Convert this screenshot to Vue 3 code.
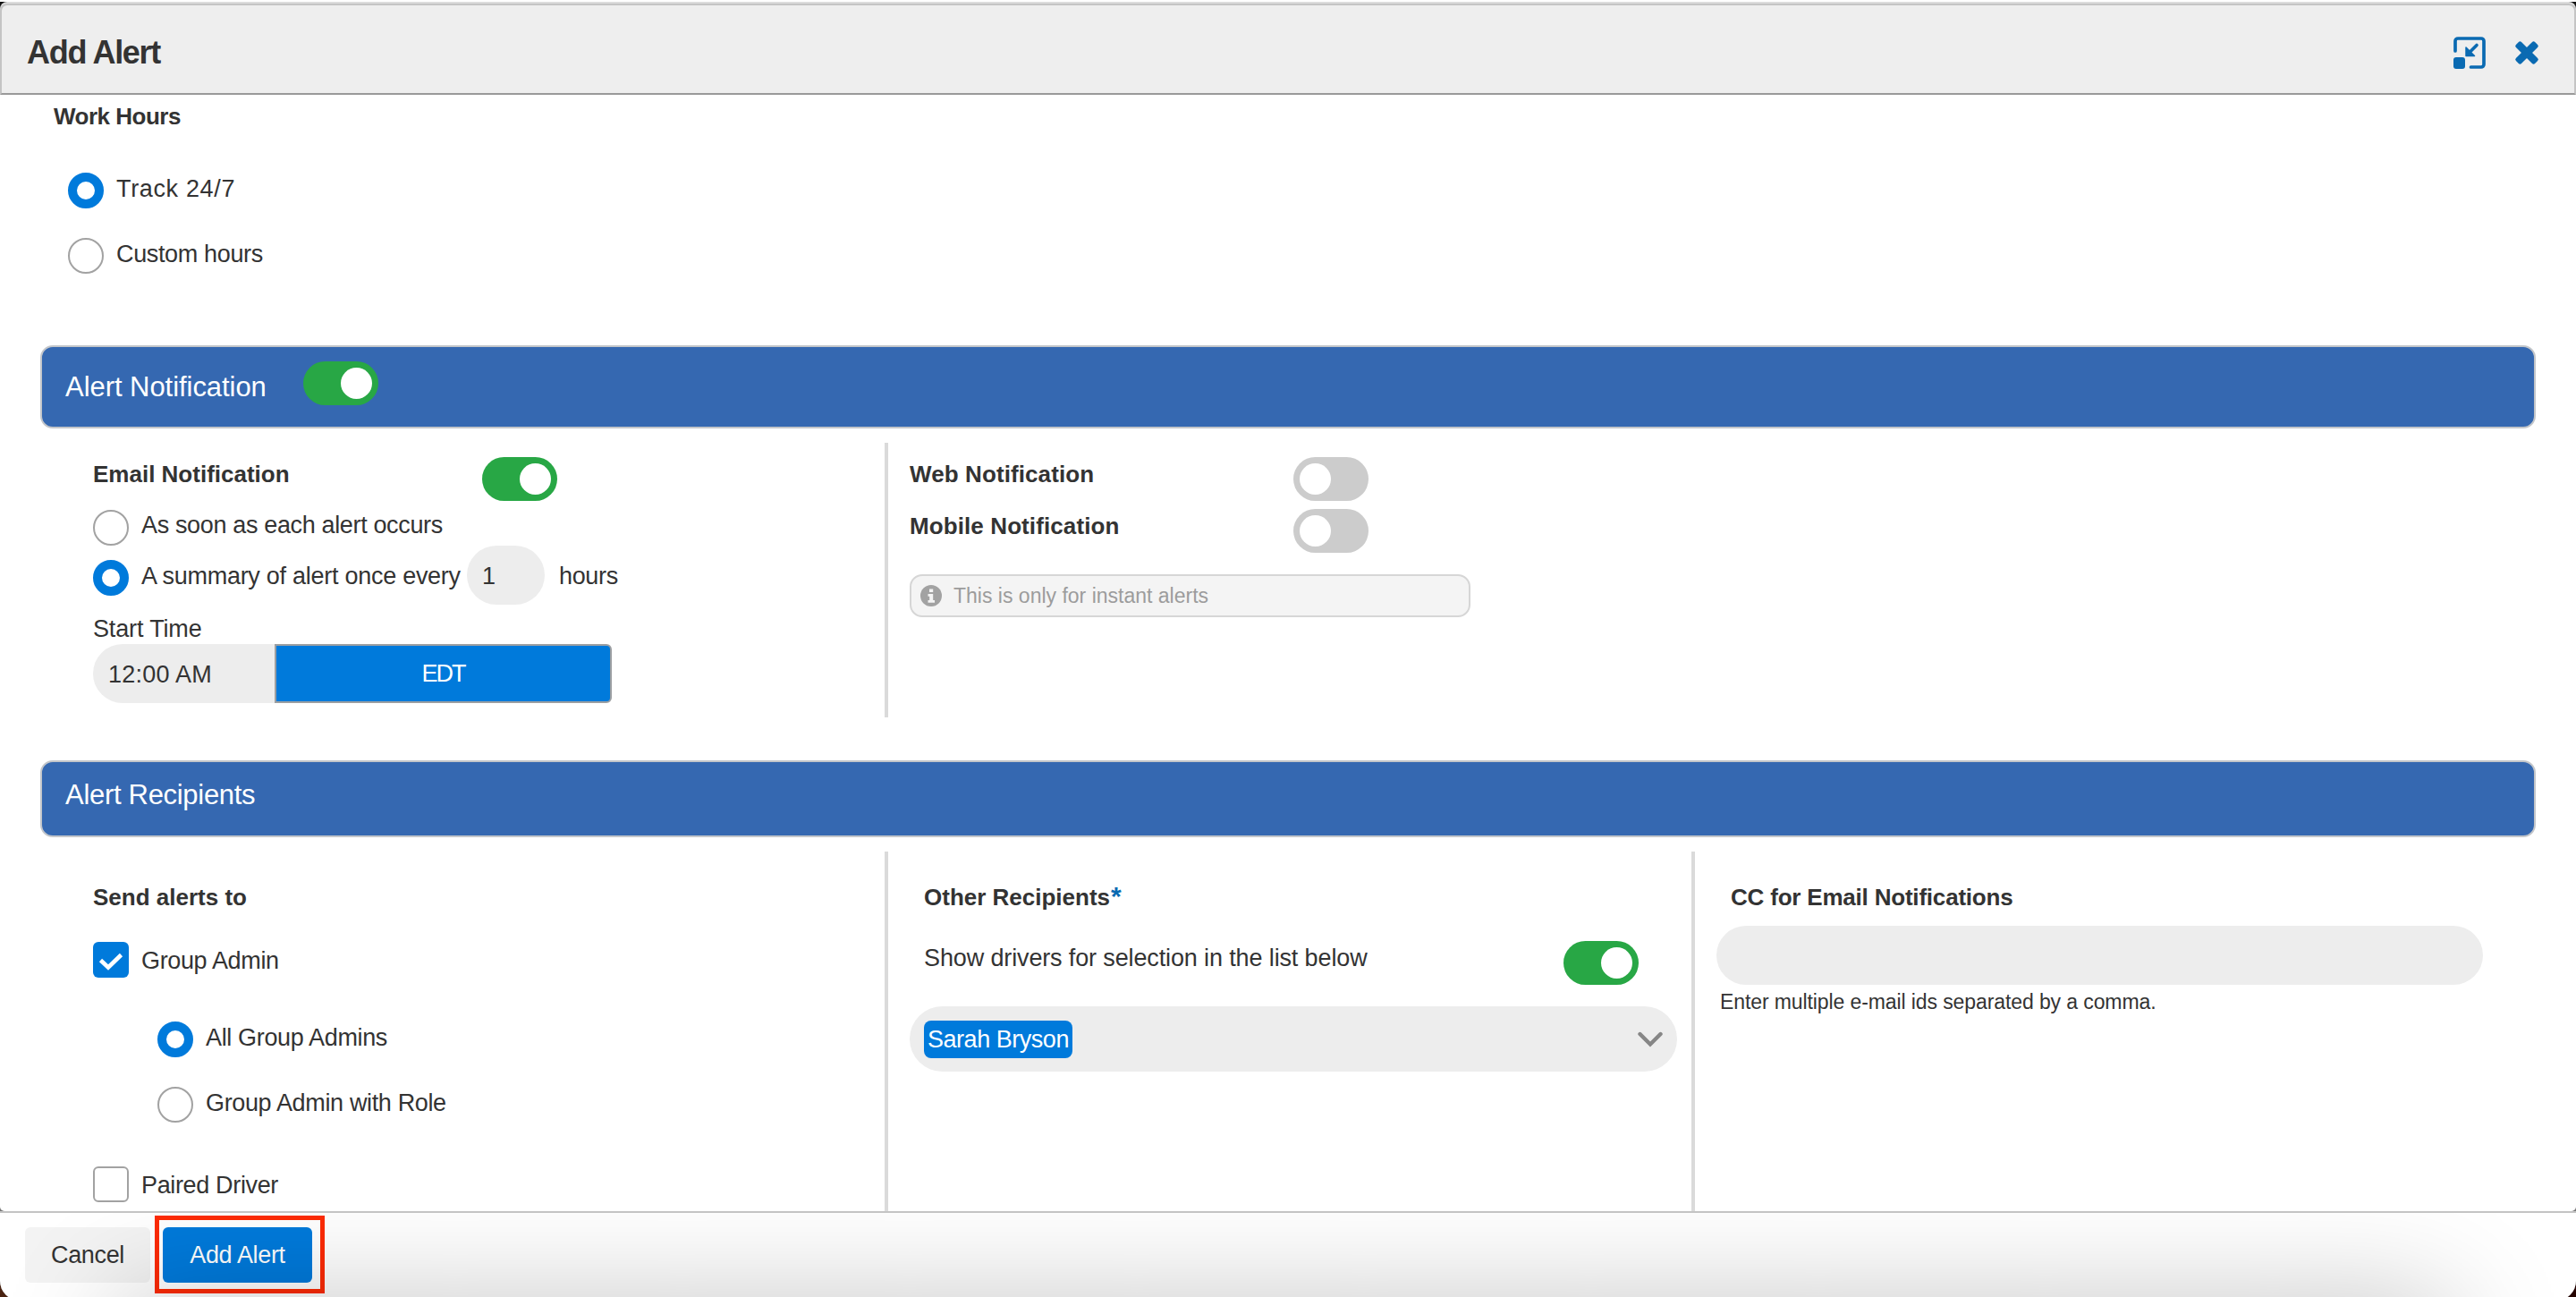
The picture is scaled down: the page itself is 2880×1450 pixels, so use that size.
<script setup>
import { ref } from 'vue';

const workHours = ref('all');
const alertEnabled = ref(true);
const emailEnabled = ref(true);
const webEnabled = ref(false);
const mobileEnabled = ref(false);
const frequency = ref('summary');
const groupAdmin = ref(true);
const adminScope = ref('all');
const pairedDriver = ref(false);
const showDrivers = ref(true);
const recipients = ref(['Sarah Bryson']);
</script>

<template>
  <div class="window">
    <div class="modal">
      <header class="modal-header">
        <h1>Add Alert</h1>
        <div class="header-actions">
          <svg class="resize-icon" viewBox="0 0 36 36">
            <path d="M2 16V5a3 3 0 0 1 3-3h26a3 3 0 0 1 3 3v26a3 3 0 0 1-3 3H19.5" fill="none" stroke="#0a6ab2" stroke-width="3.700" stroke-linecap="round" />
            <rect x="0" y="23" width="13" height="13" rx="3" fill="#0a6ab2" />
            <path d="M26 9.500L17 18.500" stroke="#0a6ab2" stroke-width="3.600" stroke-linecap="round" />
            <path d="M14 12v9.500h9.500z" fill="#0a6ab2" stroke="#0a6ab2" stroke-width="1.500" stroke-linejoin="round" />
          </svg>
          <svg class="close-icon" viewBox="0 0 28 28" fill="#0a6ab2">
            <rect x="-1" y="9.700" width="30" height="8.600" rx="2.200" transform="rotate(45 14 14)" />
            <rect x="-1" y="9.700" width="30" height="8.600" rx="2.200" transform="rotate(-45 14 14)" />
          </svg>
        </div>
      </header>

      <main class="modal-body">
        <section class="work-hours">
          <h2>Work Hours</h2>
          <div class="option" @click="workHours = 'all'">
            <span class="radio" :class="{ checked: workHours === 'all' }"></span>
            <span class="label track-label">Track 24/7</span>
          </div>
          <div class="option" @click="workHours = 'custom'">
            <span class="radio" :class="{ checked: workHours === 'custom' }"></span>
            <span class="label">Custom hours</span>
          </div>
        </section>

        <div class="banner banner-notification">
          <span>Alert Notification</span>
          <span class="toggle" :class="{ on: alertEnabled }" @click="alertEnabled = !alertEnabled"></span>
        </div>

        <section class="notification">
          <div class="email-col">
            <div class="email-head">
              <h2>Email Notification</h2>
              <span class="toggle" :class="{ on: emailEnabled }" @click="emailEnabled = !emailEnabled"></span>
            </div>
            <div class="option instant" @click="frequency = 'instant'">
              <span class="radio" :class="{ checked: frequency === 'instant' }"></span>
              <span class="label">As soon as each alert occurs</span>
            </div>
            <div class="summary" @click="frequency = 'summary'">
              <span class="radio" :class="{ checked: frequency === 'summary' }"></span>
              <span class="label">A summary of alert once every</span>
              <span class="hours-input">1</span>
              <span class="hours-label">hours</span>
            </div>
            <div class="start-label">Start Time</div>
            <div class="start-time">
              <span class="time-input">12:00 AM</span>
              <button class="zone">EDT</button>
            </div>
          </div>
          <div class="push-col">
            <div class="push-row">
              <h2>Web Notification</h2>
              <span class="toggle" :class="{ on: webEnabled }" @click="webEnabled = !webEnabled"></span>
            </div>
            <div class="push-row">
              <h2>Mobile Notification</h2>
              <span class="toggle" :class="{ on: mobileEnabled }" @click="mobileEnabled = !mobileEnabled"></span>
            </div>
            <div class="info">
              <svg viewBox="0 0 24 24">
                <circle cx="12" cy="12" r="12" fill="#a2a2a2" />
                <path d="M10 4.500h4.200v3.600H10zM8.500 10h5.700v7H16v2.700H8.500V17h1.700v-4.300H8.500z" fill="#f4f4f4" />
              </svg>
              <span>This is only for instant alerts</span>
            </div>
          </div>
        </section>

        <div class="banner banner-recipients">
          <span>Alert Recipients</span>
        </div>

        <section class="recipients">
          <div class="send-col">
            <h2>Send alerts to</h2>
            <div class="option group-admin" @click="groupAdmin = !groupAdmin">
              <span class="checkbox" :class="{ checked: groupAdmin }">
                <svg v-if="groupAdmin" viewBox="0 0 40 40">
                  <path d="M8.500 20.500l8.500 8L31.500 14.500" fill="none" stroke="#fff" stroke-width="4.600" />
                </svg>
              </span>
              <span class="label">Group Admin</span>
            </div>
            <div class="option nested" @click="adminScope = 'all'">
              <span class="radio" :class="{ checked: adminScope === 'all' }"></span>
              <span class="label">All Group Admins</span>
            </div>
            <div class="option nested" @click="adminScope = 'role'">
              <span class="radio" :class="{ checked: adminScope === 'role' }"></span>
              <span class="label">Group Admin with Role</span>
            </div>
            <div class="option paired" @click="pairedDriver = !pairedDriver">
              <span class="checkbox" :class="{ checked: pairedDriver }"></span>
              <span class="label">Paired Driver</span>
            </div>
          </div>

          <div class="other-col">
            <h2>Other Recipients<span class="required">*</span></h2>
            <div class="drivers-row">
              <span>Show drivers for selection in the list below</span>
              <span class="toggle" :class="{ on: showDrivers }" @click="showDrivers = !showDrivers"></span>
            </div>
            <div class="select">
              <span v-for="name in recipients" :key="name" class="chip">{{ name }}</span>
              <svg class="chevron" viewBox="0 0 28 18">
                <path d="M2.500 3L14 14.500L25.500 3" fill="none" stroke="#868686" stroke-width="4.400" stroke-linecap="round" />
              </svg>
            </div>
          </div>

          <div class="cc-col">
            <h2>CC for Email Notifications</h2>
            <div class="cc-input"></div>
            <p class="hint">Enter multiple e-mail ids separated by a comma.</p>
          </div>
        </section>
      </main>

      <footer class="modal-footer">
        <button class="cancel">Cancel</button>
        <div class="highlight">
          <button class="submit">Add Alert</button>
        </div>
        <div class="shade"></div>
      </footer>
    </div>
  </div>
</template>

<style>
body {
  margin: 0;
}
</style>

<style scoped>
.window {
  width: 2880px;
  height: 1450px;
  overflow: hidden;
  background: linear-gradient(to right, #4a2211, #260400);
}

.modal {
  display: flex;
  flex-direction: column;
  height: 1454px;
  overflow: hidden;
  border-top: 2px solid #fff;
  border-radius: 0 0 22px 22px;
  background: #777;
  color: #333;
  font-family: "Liberation Sans", Arial, sans-serif;
  font-size: 27px;
  line-height: 30px;
  letter-spacing: -0.35px;
}

.modal *,
.modal {
  box-sizing: border-box;
}

h1,
h2,
p {
  margin: 0;
}

h2 {
  font-size: 26px;
  line-height: 30px;
  letter-spacing: 0;
  color: #333;
  white-space: nowrap;
}

button {
  padding: 0;
  border: none;
  font: inherit;
  letter-spacing: inherit;
}

.modal-header {
  display: flex;
  justify-content: space-between;
  align-items: center;
  height: 102px;
  flex: none;
  margin-top: 2px;
  padding: 0 39px 0 28px;
  border: 2px solid #c4c4c4;
  border-bottom-color: #999;
  border-radius: 8px 8px 0 0;
  box-shadow: 0 -2px 0 #dcdcdc, 0 0 0 8px #111;
  background: #eee;
}

h1 {
  margin-top: 7px;
  font-size: 36px;
  line-height: 40px;
  letter-spacing: -1.3px;
}

.header-actions {
  display: flex;
  align-items: center;
  gap: 32px;
  margin-top: 8px;
}

.resize-icon {
  width: 36px;
  height: 36px;
}

.close-icon {
  width: 28px;
  height: 28px;
}

.modal-body {
  position: relative;
  height: 1248px;
  flex: none;
  overflow: hidden;
  padding: 9px 45px 0;
  border-radius: 0 0 5px 5px;
  background: #fff;
}

.work-hours {
  height: 271px;
  padding-left: 15px;
}

.work-hours h2 {
  letter-spacing: -0.5px;
}

.work-hours .option {
  margin: 0 0 33px 16px;
}

.work-hours h2 + .option {
  margin-top: 48px;
}

.option {
  display: flex;
  align-items: center;
  height: 40px;
}

.label {
  margin: -5px 0 0 14px;
  white-space: nowrap;
}

.track-label {
  letter-spacing: 0.65px;
}

.radio {
  flex: none;
  width: 40px;
  height: 40px;
  border: 2px solid #a2a2a2;
  border-radius: 50%;
  background: #fff;
}

.radio.checked {
  border: 10px solid #007adb;
}

.checkbox {
  flex: none;
  width: 40px;
  height: 40px;
  border: 2px solid #a2a2a2;
  border-radius: 6px;
}

.checkbox.checked {
  border: none;
  background: #007adb;
}

.checkbox svg {
  display: block;
}

.checkbox + .label {
  margin-top: 1px;
}

.toggle {
  display: flex;
  flex: none;
  width: 84px;
  height: 49px;
  padding: 7px;
  border-radius: 25px;
  background: #ccc;
}

.toggle::after {
  content: "";
  width: 35px;
  height: 35px;
  border-radius: 50%;
  background: #fff;
}

.toggle.on {
  justify-content: flex-end;
  background: #28a745;
}

.banner {
  display: flex;
  padding-left: 26px;
  border: 2px solid #c3c6ca;
  border-radius: 14px;
  background: #3568b1;
  color: #fff;
  font-size: 31px;
  line-height: 36px;
  letter-spacing: -0.05px;
}

.banner-notification {
  height: 93px;
  padding-top: 16px;
}

.banner-notification span:first-child {
  width: 266px;
  padding-top: 11px;
}

.banner-recipients {
  height: 86px;
  padding-top: 19px;
  letter-spacing: -0.3px;
}

.notification {
  display: flex;
  height: 371px;
  padding-top: 16px;
}

.email-col {
  width: 944px;
  padding: 16px 0 0 59px;
}

.email-head {
  display: flex;
  justify-content: space-between;
  width: 519px;
  height: 59px;
}

.email-head h2 {
  padding-top: 4px;
}

.instant .label {
  margin-top: -7px;
}

.summary {
  display: flex;
  align-items: center;
  height: 66px;
}

.summary .radio {
  margin-top: 6px;
}

.summary .label {
  width: 364px;
  margin-top: 1px;
  letter-spacing: -0.27px;
}

.hours-input {
  width: 87px;
  height: 66px;
  padding: 19px 0 0 17px;
  border-radius: 33px;
  background: #ededed;
}

.hours-label {
  margin: 1px 0 0 16px;
}

.start-label {
  height: 44px;
  padding-top: 12px;
  letter-spacing: -0.15px;
}

.start-time {
  display: flex;
}

.time-input {
  width: 203px;
  height: 66px;
  padding: 19px 0 0 17px;
  border-radius: 33px 0 0 33px;
  background: #ededed;
  letter-spacing: 0.25px;
}

.zone {
  width: 377px;
  height: 66px;
  border: 2px solid #9c9fa2;
  border-radius: 0 6px 6px 0;
  background: #007adb;
  color: #fff;
  letter-spacing: -2px;
}

.push-col {
  height: 307px;
  padding: 16px 0 0 24px;
  border-left: 4px solid #dadada;
}

.push-row {
  display: flex;
  justify-content: space-between;
  width: 513px;
  height: 58px;
}

.push-row h2 {
  padding-top: 4px;
  letter-spacing: 0.1px;
}

.info {
  display: flex;
  align-items: center;
  width: 627px;
  height: 48px;
  margin-top: 15px;
  padding-left: 10px;
  border: 2px solid #d6d6d6;
  border-radius: 14px;
  background: #f4f4f4;
  color: #9c9c9c;
  font-size: 23px;
  letter-spacing: 0;
}

.info svg {
  width: 24px;
  height: 24px;
  margin-right: 13px;
}

.recipients {
  display: flex;
  padding-top: 16px;
}

.send-col {
  width: 944px;
  padding: 36px 0 0 59px;
}

.group-admin {
  margin: 35px 0 49px;
}

.nested {
  margin: 0 0 33px 72px;
}

.paired {
  margin-top: 49px;
}

.other-col {
  width: 902px;
  height: 410px;
  padding: 36px 16px 0 24px;
  border-left: 4px solid #dadada;
}

.other-col h2 {
  padding-left: 16px;
}

.required {
  margin-left: 1px;
  color: #0a6ab2;
  font-size: 30px;
  line-height: 20px;
}

.drivers-row {
  display: flex;
  justify-content: space-between;
  margin: 34px 0 24px;
  padding: 0 43px 0 16px;
  letter-spacing: -0.13px;
}

.drivers-row span:first-child {
  padding-top: 4px;
}

.select {
  display: flex;
  align-items: center;
  height: 73px;
  padding: 0 16px;
  border-radius: 37px;
  background: #ededed;
}

.chip {
  height: 42px;
  padding: 6px 4px 0;
  border-radius: 8px;
  background: #007adb;
  color: #fff;
  letter-spacing: -0.47px;
}

.chevron {
  width: 28px;
  height: 18px;
  margin-left: auto;
}

.cc-col {
  height: 410px;
  padding: 36px 0 0 24px;
  border-left: 4px solid #dadada;
}

.cc-col h2 {
  padding-left: 16px;
  letter-spacing: -0.2px;
}

.cc-input {
  width: 857px;
  height: 66px;
  margin: 17px 0 4px;
  border-radius: 33px;
  background: #ededed;
}

.hint {
  padding-left: 4px;
  font-size: 23px;
  letter-spacing: -0.1px;
}

.modal-footer {
  position: relative;
  display: flex;
  align-items: flex-start;
  flex: 1;
  overflow: hidden;
  padding: 3px 0 0 28px;
  border-top: 2px solid #c4c4c4;
  background: #fff;
}

.cancel {
  width: 140px;
  height: 62px;
  margin: 13px 5px 0 0;
  border-radius: 6px;
  background: #f3f3f3;
  color: #333;
}

.highlight {
  width: 190px;
  height: 87px;
  padding: 8px 4px;
  border: 5px solid #fd2b05;
}

.submit {
  display: block;
  width: 167px;
  height: 62px;
  border-radius: 6px;
  background: #007adb;
  color: #fff;
}

/* soft shadow rising from the bottom edge of the window */
.shade {
  position: absolute;
  top: 96px;
  left: 130px;
  right: 140px;
  height: 200px;
  box-shadow: 0 0 130px rgba(0, 0, 0, 0.23);
  pointer-events: none;
}
</style>
